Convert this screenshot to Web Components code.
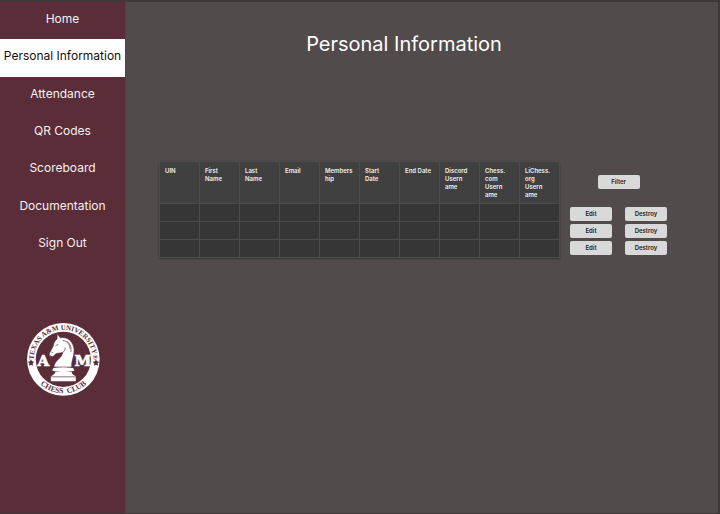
<!DOCTYPE html>
<html lang="en">
<head>
<meta charset="utf-8">
<title>Personal Information</title>
<style>
html, body { margin: 0; height: 100%; }
body { font-family: Inter, "Liberation Sans", sans-serif; background: #524b4b; }
</style>
</head>
<body>
<chess-app></chess-app>

<template id="t-app">
<style>
:host { display: grid; grid-template-columns: 126px 1fr; min-height: 100vh; box-sizing: border-box; border: solid #3e3838; border-width: 2px 2px 1px 0; background: #524b4b; }
aside { background: #5a2d39; display: flex; flex-direction: column; border-right: 1px solid #564043; }
nav { display: grid; grid-template-rows: repeat(7, 1fr); height: 262px; }
club-logo { margin: 59px 0 0 27px; }
main { display: flex; flex-direction: column; }
h1 { margin: 30px 0 0; font-size: 20px; line-height: 24px; font-weight: 400; color: #fff; text-align: center; padding-right: 36px; }
.content { display: flex; margin: 105px 51px 0 33px; gap: 10px; }
member-table { flex: 1; }
</style>
<aside>
<nav aria-label="Main">
<nav-item>Home</nav-item>
<nav-item active>Personal Information</nav-item>
<nav-item>Attendance</nav-item>
<nav-item>QR Codes</nav-item>
<nav-item>Scoreboard</nav-item>
<nav-item>Documentation</nav-item>
<nav-item>Sign Out</nav-item>
</nav>
<club-logo></club-logo>
</aside>
<main>
<h1>Personal Information</h1>
<div class="content">
<member-table></member-table>
<row-actions></row-actions>
</div>
</main>
</template>

<template id="t-nav">
<style>
:host { display: grid; color: #f6eff1; }
:host([active]) { background: #fff; color: #111; }
a { display: flex; align-items: center; justify-content: center; padding-bottom: 4px; color: inherit; text-decoration: none; font-size: 12px; line-height: 16px; white-space: nowrap; }
</style>
<a href="#"><slot></slot></a>
</template>

<template id="t-table">
<style>
:host { display: block; }
table { width: 100%; border-collapse: collapse; table-layout: fixed; background: #363636; box-shadow: 0 1px 2px #0005; }
th, td { border: 1px solid #4d4c4c; box-sizing: border-box; }
th { height: 42px; padding: 5px 2px 3px 5px; background: #404040; color: #f0f0f0; font-size: 6px; line-height: 8px; font-weight: 600; text-align: left; vertical-align: top; white-space: nowrap; }
td { height: 18px; padding: 0; }
</style>
<table>
<thead><tr><th>UIN</th><th>First<br>Name</th><th>Last<br>Name</th><th>Email</th><th>Members<br>hip</th><th>Start<br>Date</th><th>End Date</th><th>Discord<br>Usern<br>ame</th><th>Chess.<br>com<br>Usern<br>ame</th><th>LiChess.<br>org<br>Usern<br>ame</th></tr></thead>
<tbody></tbody>
</table>
</template>

<template id="t-actions">
<style>
:host { display: grid; grid-template-columns: 42px 42px; column-gap: 13px; align-content: start; padding-top: 14px; }
.filter { grid-column: 1 / -1; justify-self: center; }
.rows { grid-column: 1 / -1; display: grid; grid-template-columns: subgrid; row-gap: 3px; margin-top: 18px; }
</style>
<pill-button class="filter">Filter</pill-button>
<div class="rows">
<pill-button>Edit</pill-button><pill-button>Destroy</pill-button>
<pill-button>Edit</pill-button><pill-button>Destroy</pill-button>
<pill-button>Edit</pill-button><pill-button>Destroy</pill-button>
</div>
</template>

<template id="t-pill">
<style>
:host { display: block; width: 42px; }
button { display: block; width: 100%; height: 14px; padding: 0; border: 0; border-radius: 2px; background: #d9d9d9; color: #1c1c1c; font: 600 6px/14px Inter, "Liberation Sans", sans-serif; text-align: center; }
</style>
<button type="button"><slot></slot></button>
</template>

<template id="t-logo">
<style>
:host { display: block; width: 73px; }
svg { display: block; width: 100%; }
text { font-family: "Liberation Serif", serif; font-weight: 700; }
.letter { font-family: "DejaVu Serif", serif; font-size: 45px; stroke: #fff; stroke-width: 2px; }
</style>
<svg viewBox="27 25 217 217" role="img" aria-label="Texas A&amp;M University Chess Club">
<defs>
<path id="upper" d="M47 133A88 88 0 0 1 223 133"/>
<path id="lower" d="M34 133A101 101 0 0 0 236 133"/>
</defs>
<circle cx="135" cy="133" r="108" fill="#fff"/>
<circle cx="135" cy="133" r="82" fill="#5a2d39"/>
<g fill="#5a2d39">
<text font-size="21" text-anchor="middle"><textPath href="#upper" startOffset="50%">TEXAS A&amp;M UNIVERSITY®</textPath></text>
<text font-size="23" text-anchor="middle"><textPath href="#lower" startOffset="50%">CHESS&#160; CLUB</textPath></text>
<path id="star" d="M39 133l3 6 7 1-5 5 1 7-6-3-6 3 1-7-5-5 7-1z"/>
<use href="#star" x="193"/>
</g>
<g fill="#fff">
<text class="letter" x="76" y="153" text-anchor="middle">A</text>
<text class="letter" x="193" y="153" text-anchor="middle">M</text>
<path stroke="#5a2d39" stroke-width="2" d="M117 57l9 12c20-4 35 8 40 28 5 21-8 39-6 59h-53c1-20 24-25 26-44-8 4-17 1-23 7-3 5-7 8-12 5-5-1-6-6-4-10l11-21c2-10 4-15 11-20z"/>
<path d="M105 159q29-5 59 0l4 8q-33 8-66 0zM111 171h49q0 8 12 12v15H98v-15q12-4 13-12z"/>
</g>
<g fill="none" stroke="#5a2d39" stroke-width="2">
<path d="M112 92l8-3M99 111l5 2M133 77c14 2 21 11 22 25M146 79c10 9 14 19 11 33M134 112c5-4 7-8 6-14M98 185h74"/>
</g>
</svg>
</template>

<script>
const define = (name, id, setup) => customElements.define(name, class extends HTMLElement {
  constructor() {
    super();
    const root = this.attachShadow({ mode: "open" });
    root.append(document.getElementById(id).content.cloneNode(true));
    if (setup) setup(root);
  }
});
define("nav-item", "t-nav");
define("club-logo", "t-logo");
define("pill-button", "t-pill");
define("row-actions", "t-actions");
define("member-table", "t-table", root => {
  const body = root.querySelector("tbody");
  for (let r = 0; r < 3; r++) {
    const row = body.insertRow();
    for (let c = 0; c < 10; c++) row.insertCell();
  }
});
define("chess-app", "t-app");
</script>
</body>
</html>
